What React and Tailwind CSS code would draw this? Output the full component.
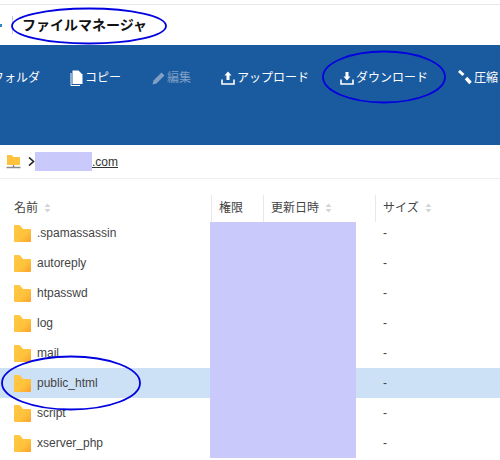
const FONT = "font-['Liberation_Sans','Noto_Sans_CJK_JP',sans-serif]";

const FOLDERS = [
  '.spamassassin',
  'autoreply',
  'htpasswd',
  'log',
  'mail',
  'public_html',
  'script',
  'xserver_php',
];

const FolderIcon = () => (
  <svg width="17" height="17" viewBox="0 0 17 17" className="shrink-0">
    <defs>
      <linearGradient id="folderFill" x1="0" y1="0" x2="1" y2="1">
        <stop offset="0" stopColor="#ffc843" />
        <stop offset="0.6" stopColor="#ffc23c" />
        <stop offset="1" stopColor="#fba02a" />
      </linearGradient>
    </defs>
    <path d="M0 1Q0 0 1 0H5Q6 0 7 1.5L9 4H16Q17 4 17 5V16Q17 17 16 17H1Q0 17 0 16Z" fill="url(#folderFill)" />
  </svg>
);

const SortArrows = () => (
  <svg width="7" height="10" viewBox="0 0 7 10" className="ml-[6px]">
    <path d="M3.5 0.5L6.5 4H0.5Z" fill="#d2d5d8" />
    <path d="M3.5 9.5L6.5 6H0.5Z" fill="#d2d5d8" />
  </svg>
);

const CopyIcon = () => (
  <svg width="14" height="16" viewBox="0 0 14 16" className="shrink-0">
    <path d="M1 3V15.5H10" fill="none" stroke="#fff" strokeWidth="1" />
    <path d="M2.5 0.5H8.5L12.5 4.5V14H2.5Z" fill="#fff" />
  </svg>
);

const EditIcon = () => (
  <svg width="14" height="14" viewBox="0 0 14 14" className="shrink-0">
    <path d="M0.5 13.5L1.5 9.5L9.5 1.5L12.5 4.5L4.5 12.5Z" fill="#7f9fc5" />
  </svg>
);

const UploadIcon = () => (
  <svg width="14" height="14" viewBox="0 0 14 14" className="shrink-0">
    <path d="M7 0.5L10.5 4.5H8.5V9H5.5V4.5H3.5Z" fill="#fff" />
    <path d="M1 8.5V13H13V8.5" fill="none" stroke="#fff" strokeWidth="1.6" />
  </svg>
);

const DownloadIcon = () => (
  <svg width="14" height="14" viewBox="0 0 14 14" className="shrink-0">
    <path d="M5.5 1H8.5V5.5H10.5L7 9.5L3.5 5.5H5.5Z" fill="#fff" />
    <path d="M1 8.5V13H13V8.5" fill="none" stroke="#fff" strokeWidth="1.6" />
  </svg>
);

const CompressIcon = () => (
  <svg width="14" height="15" viewBox="0 0 14 15" className="shrink-0">
    <path d="M1 1L5.5 5" fill="none" stroke="#fff" strokeWidth="3" />
    <path d="M8 8L12.5 13" fill="none" stroke="#fff" strokeWidth="3.4" />
  </svg>
);

const ToolbarItem = ({ icon, label, muted, gap, className }) => (
  <div className={`flex shrink-0 items-center ${gap} ${className}`}>
    {icon}
    <span className={`text-[12px] whitespace-nowrap ${muted ? 'text-[#7f9fc5]' : 'text-white'}`}>{label}</span>
  </div>
);

const HeaderCell = ({ label, sortable, className }) => (
  <div className={`flex h-[27px] items-center border-l border-[#e8e8e8] pb-[2px] pl-[7px] text-[12px] text-[#444] ${className}`}>
    {label}
    {sortable && <SortArrows />}
  </div>
);

const App = () => {
  return (
    <div className={`relative h-[460px] w-[500px] overflow-hidden bg-white ${FONT}`}>
      <div className="h-[4px]" />
      <div className="h-[1px] bg-[#e8e8e8]" />

      {/* title */}
      <div className="flex h-[40px] items-center">
        <div className="h-[3px] w-[2px] bg-[#2b8bc5]" />
        <div className="ml-[10px] h-[18px] w-[1px] bg-[#c8ccd8]" />
        <h1 className="ml-[9px] text-[14px] font-bold text-[#111]">ファイルマネージャ</h1>
      </div>

      {/* toolbar */}
      <div className="flex h-[100px] overflow-hidden bg-[#1a5a9e] pt-[23px]">
        <div className="flex h-[19px] items-center">
          <span className="-ml-[8px] w-[48px] shrink-0 text-[12px] whitespace-nowrap text-white">フォルダ</span>
          <ToolbarItem icon={<CopyIcon />} label="コピー" gap="gap-[1px]" className="ml-[30px]" />
          <ToolbarItem icon={<EditIcon />} label="編集" muted gap="gap-[1px]" className="ml-[31px]" />
          <ToolbarItem icon={<UploadIcon />} label="アップロード" gap="gap-[2px]" className="ml-[30px]" />
          <ToolbarItem icon={<DownloadIcon />} label="ダウンロード" gap="gap-[2px]" className="ml-[31px]" />
          <ToolbarItem icon={<CompressIcon />} label="圧縮" gap="gap-[2px]" className="ml-[30px]" />
        </div>
      </div>

      {/* breadcrumb */}
      <div className="flex h-[33px] items-center">
        <svg width="15" height="15" viewBox="0 0 15 15" className="ml-[6px] shrink-0">
          <path d="M1 1H5.5L7.5 3H14V11H1Z" fill="#ffc23c" />
          <path d="M0.5 13.5H14.5" stroke="#8a8a8a" strokeWidth="1.5" />
          <path d="M7.5 11V13" stroke="#8a8a8a" strokeWidth="1.5" />
        </svg>
        <svg width="7" height="9" viewBox="0 0 7 9" className="ml-[7px] shrink-0">
          <path d="M1 0.5L5.5 4.5L1 8.5" fill="none" stroke="#222" strokeWidth="1.6" />
        </svg>
        <div className="h-[19px] w-[57px] bg-[#c9c9fb]" />
        <span className="text-[12px] text-[#333] underline">.com</span>
      </div>
      <div className="h-[1px] bg-[#eeeeee]" />

      {/* table header */}
      <div className="flex pt-[16px]">
        <div className="flex h-[27px] w-[211px] items-center pb-[2px] pl-[14px] text-[12px] text-[#444]">
          名前
          <SortArrows />
        </div>
        <HeaderCell label="権限" className="w-[52px]" />
        <HeaderCell label="更新日時" sortable className="w-[112px]" />
        <HeaderCell label="サイズ" sortable className="flex-1" />
      </div>

      {/* rows, first one tucks under the header a little */}
      <div className="-mt-[4px]">
        {FOLDERS.map((name, i) => {
          const active = name === 'public_html';
          return (
            <div key={name} className="flex h-[30px]">
              <div className={`flex w-[210px] items-center pl-[14px] ${active ? 'bg-[#cde1f6]' : ''}`}>
                <FolderIcon />
                <span className="ml-[6px] text-[12px] text-[#444]">{name}</span>
              </div>
              <div className={`w-[146px] bg-[#c9c9fb] ${i === 0 ? 'mt-[4px]' : ''}`} />
              <div className={`flex flex-1 items-center pl-[27px] text-[12px] text-[#444] ${active ? 'bg-[#cde1f6]' : ''}`}>-</div>
            </div>
          );
        })}
      </div>

      {/* hand drawn annotations */}
      <svg width="500" height="460" className="pointer-events-none absolute top-0 left-0">
        <ellipse cx="89" cy="26" rx="77" ry="17.5" fill="none" stroke="#0000e0" strokeWidth="1.8" />
        <ellipse cx="384" cy="77" rx="61" ry="25.5" fill="none" stroke="#0000e0" strokeWidth="1.8" />
        <ellipse cx="71" cy="383" rx="69" ry="26.5" fill="none" stroke="#0000e0" strokeWidth="1.8" />
      </svg>
    </div>
  );
};

export default App;
